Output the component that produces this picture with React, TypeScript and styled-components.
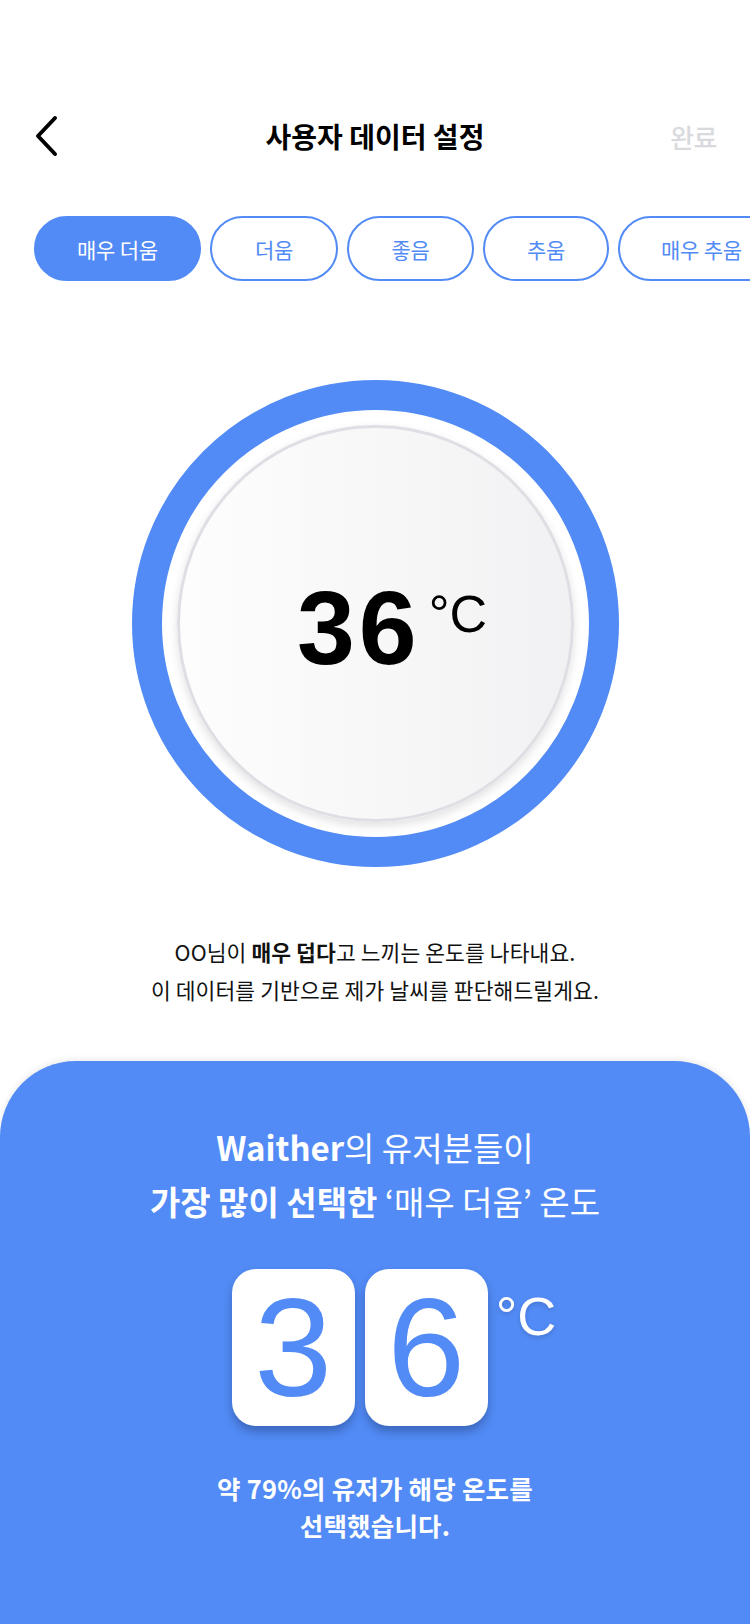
import React from "react";
import styled, { createGlobalStyle } from "styled-components";

const BLUE = "#528bf5";
const KR = `"Noto Sans CJK KR", "Noto Sans", sans-serif`;
const NUM = `"Liberation Sans", "Noto Sans CJK KR", sans-serif`;

const GlobalStyle = createGlobalStyle`
  html, body {
    margin: 0;
    padding: 0;
    background: #ffffff;
  }
  body {
    font-family: ${KR};
    -webkit-font-smoothing: antialiased;
  }
`;

const levels = ["매우 더움", "더움", "좋음", "추움", "매우 추움"];
const chipWidths = [167, 128, 127, 126, 167];

export default function App(): JSX.Element {
  return (
    <Page>
      <GlobalStyle />
      <Header>
        <BackButton aria-label="뒤로">
          <svg width="28" height="42" viewBox="0 0 28 42" fill="none">
            <path
              d="M22 3 L5 21 L22 39"
              stroke="#000"
              strokeWidth="4"
              strokeLinecap="round"
              strokeLinejoin="round"
            />
          </svg>
        </BackButton>
        <Title>사용자 데이터 설정</Title>
        <DoneButton>완료</DoneButton>
      </Header>

      <ChipRow>
        {levels.map((label, i) => (
          <Chip key={label} $active={i === 0} $width={chipWidths[i]}>
            {label}
          </Chip>
        ))}
      </ChipRow>

      <Dial>
        <DialFace>
          <BigValue>36</BigValue>
          <BigUnit>°C</BigUnit>
        </DialFace>
      </Dial>

      <Description>
        OO님이 <strong>매우 덥다</strong>고 느끼는 온도를 나타내요.
        <br />이 데이터를 기반으로 제가 날씨를 판단해드릴게요.
      </Description>

      <Panel>
        <PanelTitle>
          <strong>Waither</strong>의 유저분들이
          <br />
          <strong>가장 많이 선택한</strong> ‘매우 더움’ 온도
        </PanelTitle>

        <CardRow>
          <DigitCard>3</DigitCard>
          <DigitCard>6</DigitCard>
          <CardUnit>°C</CardUnit>
        </CardRow>

        <PanelNote>
          약 79%의 유저가 해당 온도를
          <br />
          선택했습니다.
        </PanelNote>
      </Panel>
    </Page>
  );
}

const Page = styled.div`
  width: 750px;
  min-height: 1624px;
  display: flex;
  flex-direction: column;
  overflow: hidden;
  background: #fff;
`;

const Header = styled.header`
  margin-top: 106px;
  height: 60px;
  display: flex;
  align-items: center;
  justify-content: space-between;
  padding: 0 33px 0 33px;
`;

const BackButton = styled.button`
  width: 50px;
  height: 44px;
  border: 0;
  padding: 0;
  background: none;
  display: flex;
  align-items: center;
  justify-content: flex-start;
`;

const Title = styled.h1`
  margin: 0;
  font-family: ${KR};
  font-size: 28px;
  font-weight: 700;
  letter-spacing: 0;
  color: #000;
`;

const DoneButton = styled.span`
  width: 50px;
  font-family: ${KR};
  font-size: 26px;
  font-weight: 500;
  letter-spacing: -0.5px;
  color: #dadade;
  text-align: right;
`;

const ChipRow = styled.div`
  margin-top: 50px;
  padding-left: 34px;
  display: flex;
  gap: 9px;
  white-space: nowrap;
`;

const Chip = styled.div<{ $active: boolean; $width: number }>`
  flex: 0 0 ${(p) => p.$width}px;
  height: 65px;
  box-sizing: border-box;
  border-radius: 33px;
  border: 2px solid ${BLUE};
  background: ${(p) => (p.$active ? BLUE : "#fff")};
  color: ${(p) => (p.$active ? "#fff" : BLUE)};
  display: flex;
  align-items: center;
  justify-content: center;
  font-family: ${KR};
  font-size: 21px;
  font-weight: 400;
  letter-spacing: -0.2px;
`;

const Dial = styled.div`
  align-self: center;
  margin-top: 99px;
  width: 487px;
  height: 487px;
  box-sizing: border-box;
  border-radius: 50%;
  border: 30px solid ${BLUE};
  background: #fff;
  display: flex;
  align-items: center;
  justify-content: center;
`;

const DialFace = styled.div`
  width: 397px;
  height: 397px;
  box-sizing: border-box;
  border-radius: 50%;
  border: 3px solid #dedfe4;
  background: linear-gradient(90deg, #fdfdfd 0%, #f7f7f8 55%, #f1f1f3 100%);
  box-shadow: 0 4px 10px rgba(0, 0, 0, 0.12);
  display: flex;
  align-items: center;
  justify-content: center;
  padding-left: 34px;
  padding-top: 8px;
`;

const BigValue = styled.span`
  font-family: ${NUM};
  font-size: 104px;
  font-weight: 700;
  line-height: 1;
  color: #000;
  letter-spacing: 4px;
`;

const BigUnit = styled.span`
  align-self: flex-start;
  margin-top: 152px;
  margin-left: 8px;
  font-family: ${NUM};
  font-size: 52px;
  font-weight: 400;
  line-height: 1;
  color: #000;
`;

const Description = styled.p`
  margin: 66px 0 0;
  text-align: center;
  font-family: ${KR};
  font-size: 21.5px;
  line-height: 38px;
  letter-spacing: 0.1px;
  color: #111;

  strong {
    font-weight: 700;
  }
`;

const Panel = styled.section`
  margin-top: 52px;
  flex: 1;
  min-height: 562px;
  box-sizing: border-box;
  background: ${BLUE};
  border-radius: 76px 76px 0 0;
  box-shadow: 0 -2px 6px rgba(0, 0, 0, 0.08);
  padding-top: 59px;
  display: flex;
  flex-direction: column;
  align-items: center;
  color: #fff;
`;

const PanelTitle = styled.h2`
  margin: 0;
  text-align: center;
  font-family: ${KR};
  font-size: 33px;
  font-weight: 400;
  line-height: 54px;
  letter-spacing: 0;

  strong {
    font-weight: 700;
  }
`;

const CardRow = styled.div`
  margin-top: 41px;
  display: flex;
  align-items: flex-start;
  gap: 10px;
  padding-left: 38px;
`;

const DigitCard = styled.div`
  width: 123px;
  height: 157px;
  border-radius: 24px;
  background: #fff;
  box-shadow: 0 6px 8px rgba(20, 40, 90, 0.35);
  display: flex;
  align-items: center;
  justify-content: center;
  font-family: ${NUM};
  font-size: 140px;
  font-weight: 400;
  line-height: 1;
  color: ${BLUE};
`;

const CardUnit = styled.span`
  margin-top: 20px;
  margin-left: -2px;
  font-family: ${NUM};
  font-size: 54px;
  font-weight: 400;
  line-height: 1;
  color: #fff;
  text-shadow: 0 2px 4px rgba(0, 0, 0, 0.15);
`;

const PanelNote = styled.p`
  margin: 43px 0 0;
  text-align: center;
  font-family: ${KR};
  font-size: 25.5px;
  font-weight: 700;
  line-height: 37px;
  letter-spacing: 0.2px;
`;
